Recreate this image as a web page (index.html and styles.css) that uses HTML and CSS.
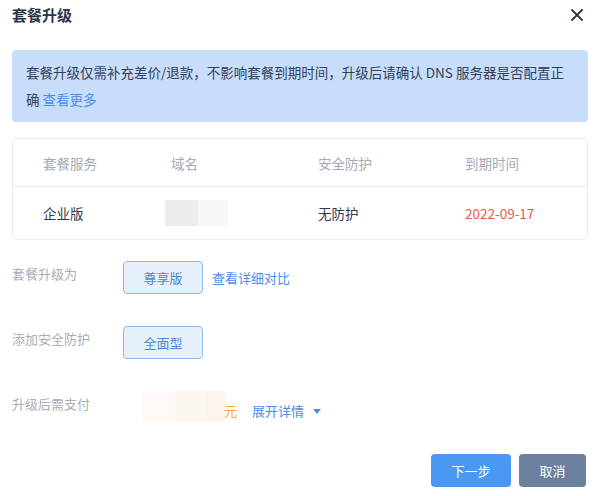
FILE: index.html
```html
<!DOCTYPE html>
<html lang="zh-CN">
<head>
<meta charset="utf-8">
<title>套餐升级</title>
<link rel="stylesheet" href="styles.css">
</head>
<body>
<div class="dialog">
  <div class="head">
    <div class="title">套餐升级</div>
    <svg class="close" width="12" height="12" viewBox="0 0 12 12"><path d="M1 1L11 11M11 1L1 11" stroke="#2f3548" stroke-width="1.8" stroke-linecap="round"/></svg>
  </div>

  <div class="alert">套餐升级仅需补充差价/退款，不影响套餐到期时间，升级后请确认 DNS 服务器是否配置正<br>确 <a class="alert-link">查看更多</a></div>

  <div class="table">
    <div class="tr th">
      <div>套餐服务</div><div>域名</div><div>安全防护</div><div>到期时间</div>
    </div>
    <div class="tr td">
      <div>企业版</div>
      <div><span class="mask"><span class="mask-a"></span><span class="mask-b"></span></span></div>
      <div>无防护</div>
      <div class="date">2022-09-17</div>
    </div>
  </div>

  <div class="form">
    <div class="row">
      <div class="label">套餐升级为</div>
      <div class="value">
        <span class="opt">尊享版</span>
        <a class="link">查看详细对比</a>
      </div>
    </div>
    <div class="row">
      <div class="label">添加安全防护</div>
      <div class="value">
        <span class="opt">全面型</span>
      </div>
    </div>
    <div class="row">
      <div class="label">升级后需支付</div>
      <div class="value pay">
        <span class="price"><span class="p1"></span><span class="p2"></span><span class="p3"></span></span>
        <span class="yuan">元</span>
        <a class="link expand">展开详情</a>
        <svg class="caret" width="8" height="5" viewBox="0 0 8 5"><path d="M0 0H8L4 5Z" fill="#4a8de6"/></svg>
      </div>
    </div>
  </div>

  <div class="footer">
    <button class="btn primary">下一步</button>
    <button class="btn cancel">取消</button>
  </div>
</div>
</body>
</html>
```

FILE: styles.css
```css
* { box-sizing: border-box; }
html, body { margin: 0; background: #ffffff; }
body {
  font-family: "Noto Sans CJK SC", "Noto Sans", sans-serif;
  color: #333a4d;
}
.dialog { padding: 0 12px; width: 600px; }

.head {
  display: flex;
  align-items: center;
  justify-content: space-between;
  height: 30px;
}
.title {
  font-size: 15px;
  font-weight: 700;
  color: #2c3349;
  line-height: 30px;
}
.close { margin-right: 5px; }

.alert {
  margin-top: 20px;
  background: #c8ddfa;
  border-radius: 4px;
  padding: 9px 14px;
  font-size: 13.5px;
  line-height: 27px;
  color: #33405a;
  white-space: nowrap;
}
.alert-link { color: #4a90e8; }

.table {
  margin-top: 16px;
  border: 1px solid #eaecef;
  border-radius: 4px;
}
.tr {
  display: grid;
  grid-template-columns: 128px 147px 147px 1fr;
  padding-left: 30px;
  align-items: center;
  font-size: 13.5px;
}
.th {
  height: 48px;
  color: #a4a9b4;
  border-bottom: 1px solid #eaecef;
}
.td {
  height: 52px;
  color: #333a4d;
}
.mask {
  display: flex;
  margin-left: -6px;
  height: 26px;
  width: 63px;
}
.mask-a { width: 33px; background: #ececee; }
.mask-b { width: 30px; background: #f7f7f8; }
.date { color: #f0574a; }

.form { margin-top: 21px; }
.row {
  display: grid;
  grid-template-columns: 111px 1fr;
  font-size: 13px;
  margin-bottom: 32px;
}
.row:last-child { margin-bottom: 0; }
.label {
  color: #a8adb6;
  line-height: 20px;
  padding-top: 3px;
}
.value {
  display: flex;
  align-items: center;
  height: 33px;
}
.opt {
  width: 80px;
  height: 33px;
  border: 1px solid #8ab9f0;
  background: #e7f1fd;
  border-radius: 4px;
  color: #4a86d8;
  display: flex;
  align-items: center;
  justify-content: center;
}
.link { color: #4a8de6; margin-left: 9px; }
.pay {
  align-items: flex-end;
  height: 31px;
}
.price {
  display: flex;
  margin-left: 19px;
  height: 31px;
  width: 83px;
}
.p1 { width: 33px; background: #fef9f5; }
.p2 { width: 32px; background: #fdf7f1; }
.p3 { width: 18px; background: #fcf3ec; }
.yuan, .expand { line-height: 20px; margin-bottom: 1px; }
.yuan { color: #f0a43a; margin-left: -1px; }
.expand { margin-left: 15px; }
.caret { margin-left: 9px; margin-bottom: 8px; }

.footer {
  margin-top: 32px;
  display: flex;
  justify-content: flex-end;
  gap: 8px;
  margin-right: 2px;
}
.btn {
  height: 33px;
  border: none;
  border-radius: 4px;
  color: #ffffff;
  font-family: "Noto Sans CJK SC", "Noto Sans", sans-serif;
  font-size: 13px;
  padding: 0;
}
.primary { width: 80px; background: #4b97f4; }
.cancel { width: 67px; background: #6b7f9e; }
```
